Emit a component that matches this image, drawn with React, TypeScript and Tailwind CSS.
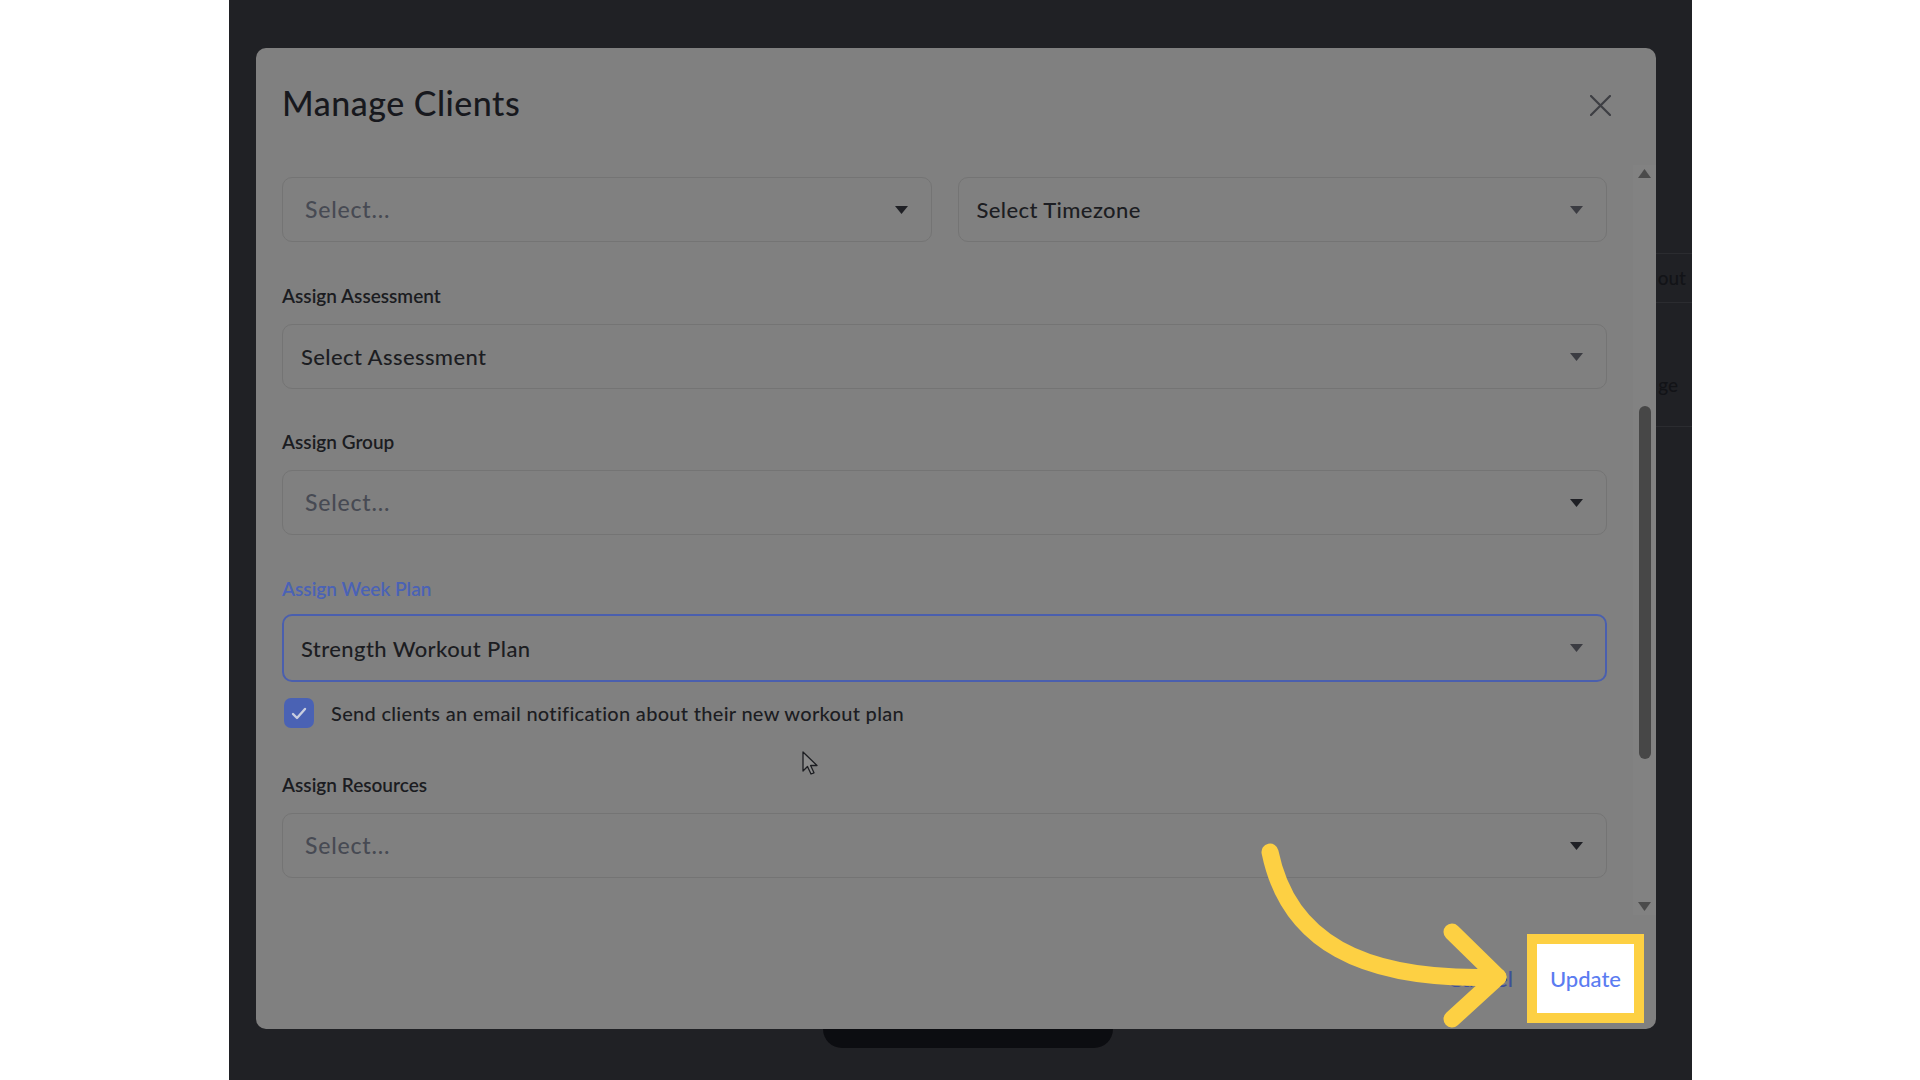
import React from 'react';

const font = { fontFamily: 'Lato, "Noto Sans", sans-serif' };

function Caret({ className = '' }: { className?: string }) {
  return (
    <svg width="13" height="8" viewBox="0 0 13 8" className={className}>
      <path d="M0 0 H13 L6.5 8 Z" fill="currentColor" />
    </svg>
  );
}

type SelectProps = {
  value?: string;
  placeholder?: string;
  focused?: boolean;
  caretClass?: string;
};

function SelectBox({ value, placeholder, focused, caretClass = 'text-[#26272c]' }: SelectProps) {
  return (
    <div
      className={
        focused
          ? 'flex h-[68px] items-center justify-between rounded-[10px] border-2 border-[#4a5fae] pl-[17px] pr-[22px]'
          : 'flex h-[65px] items-center justify-between rounded-[10px] border border-[#747474] pr-[23px] ' +
            (value ? 'pl-[18px]' : 'pl-[22px]')
      }
    >
      {value ? (
        <span className="text-[22px] font-medium tracking-[0.4px] text-[#1c1d22]">{value}</span>
      ) : (
        <span className="text-[23px] font-medium tracking-[0.8px] text-[#474a53]">{placeholder}</span>
      )}
      <Caret className={caretClass} />
    </div>
  );
}

function Label({ children, active }: { children: React.ReactNode; active?: boolean }) {
  return (
    <div
      className={
        'h-6 text-[19px] font-semibold leading-6 ' + (active ? 'text-[#4a62b6]' : 'text-[#1b1c21]')
      }
    >
      {children}
    </div>
  );
}

export default function App() {
  return (
    <div className="relative flex h-[1080px] w-[1920px] overflow-hidden bg-white" style={font}>
      <div className="ml-[229px] flex h-full w-[1463px] flex-col bg-[#202125] pl-[27px] pt-[48px]">
        <div className="flex">
          {/* modal */}
          <div className="flex h-[981px] w-[1400px] flex-col rounded-[10px] bg-[#808080]">
            <div className="flex h-[117px] items-start justify-between pl-[26px] pr-[45px] pt-[35px]">
              <h2 className="text-[34px] font-medium leading-10 tracking-[0.5px] text-[#17181d]">Manage Clients</h2>
              <button className="mt-[12px] text-[#3d3e43]">
                <svg width="21" height="21" viewBox="0 0 21 21">
                  <path d="M1 1 L20 20 M20 1 L1 20" stroke="currentColor" strokeWidth="2.2" strokeLinecap="round" />
                </svg>
              </button>
            </div>

            <div className="flex h-[750px]">
              <div className="flex flex-1 flex-col pl-[26px] pr-[26px] pt-[12px]">
                <div className="grid grid-cols-2 gap-[26px]">
                  <SelectBox placeholder="Select..." caretClass="text-[#1f2025]" />
                  <SelectBox value="Select Timezone" caretClass="text-[#3b3c42]" />
                </div>

                <div className="mt-[42px] flex flex-col gap-4">
                  <Label>Assign Assessment</Label>
                  <SelectBox value="Select Assessment" caretClass="text-[#3b3c42]" />
                </div>

                <div className="mt-[41px] flex flex-col gap-4">
                  <Label>Assign Group</Label>
                  <SelectBox placeholder="Select..." caretClass="text-[#1f2025]" />
                </div>

                <div className="mt-[42px] flex flex-col gap-[13px]">
                  <Label active>Assign Week Plan</Label>
                  <SelectBox value="Strength Workout Plan" focused caretClass="text-[#3b3c42]" />
                </div>

                <label className="ml-[2px] mt-4 flex items-center gap-[17px]">
                  <span className="flex h-[30px] w-[30px] items-center justify-center rounded-[7px] bg-[#4a62b4]">
                    <svg width="16" height="13" viewBox="0 0 16 13">
                      <path d="M2 7 L6 11 L14 2" stroke="#c9cedf" strokeWidth="2.4" fill="none" strokeLinecap="round" strokeLinejoin="round" />
                    </svg>
                  </span>
                  <span className="text-[20px] font-medium tracking-[0.3px] text-[#1c1d22]">
                    Send clients an email notification about their new workout plan
                  </span>
                </label>

                <div className="mt-[45px] flex flex-col gap-4">
                  <Label>Assign Resources</Label>
                  <SelectBox placeholder="Select..." caretClass="text-[#1f2025]" />
                </div>
              </div>

              {/* scrollbar */}
              <div className="flex w-[23px] flex-col items-center bg-[#828282] pt-[4px]">
                <svg width="13" height="9" viewBox="0 0 13 9">
                  <path d="M0 9 H13 L6.5 0 Z" fill="#4b4b4b" />
                </svg>
                <div className="mt-[228px] h-[353px] w-[12px] rounded-full bg-[#474747]" />
                <div className="flex-1" />
                <svg width="13" height="9" viewBox="0 0 13 9" className="mb-[4px]">
                  <path d="M0 0 H13 L6.5 9 Z" fill="#4b4b4b" />
                </svg>
              </div>
            </div>

            <div className="flex flex-1 items-start justify-end gap-6 pr-[22px] pt-[29px]">
              <button className="mt-[18px] text-[22px] font-medium text-[#3d4f98]">Cancel</button>
              <button className="flex h-[69px] w-[97px] items-center justify-center bg-white text-[22px] font-medium text-[#5b7cf1] ring-[10px] ring-[#fdd043]">
                Update
              </button>
            </div>
          </div>

          {/* page content peeking beside the modal */}
          <div className="flex w-[36px] flex-col pt-[205px] text-[19px] font-medium text-[#121317]">
            <div className="flex h-[50px] items-center justify-end border-y border-[#2b2c30] pr-[6px] whitespace-nowrap">
              out
            </div>
            <div className="flex h-[124px] items-start justify-end border-b border-[#2b2c30] pr-[14px] pt-[68px] whitespace-nowrap">
              ge
            </div>
          </div>
        </div>

        <div className="ml-[567px] h-[19px] w-[290px] rounded-b-[20px] bg-[#0c0d11]" />
      </div>

      {/* annotation overlay */}
      <svg className="pointer-events-none absolute left-0 top-0" width="1920" height="1080" viewBox="0 0 1920 1080">
        <path
          d="M1270 852 C 1288 940, 1360 982, 1498 977"
          stroke="#fdd043"
          strokeWidth="17"
          fill="none"
          strokeLinecap="round"
        />
        <path
          d="M1452 932 L1498 977 L1452 1019"
          stroke="#fdd043"
          strokeWidth="17"
          fill="none"
          strokeLinecap="round"
          strokeLinejoin="round"
        />
        <path
          d="M803 752 L803 771 L807.5 766.5 L811 774 L814 772.8 L810.6 765.5 L817 765.5 Z"
          fill="#8c8c8c"
          stroke="#1d1e22"
          strokeWidth="1.3"
          strokeLinejoin="round"
        />
      </svg>
    </div>
  );
}
